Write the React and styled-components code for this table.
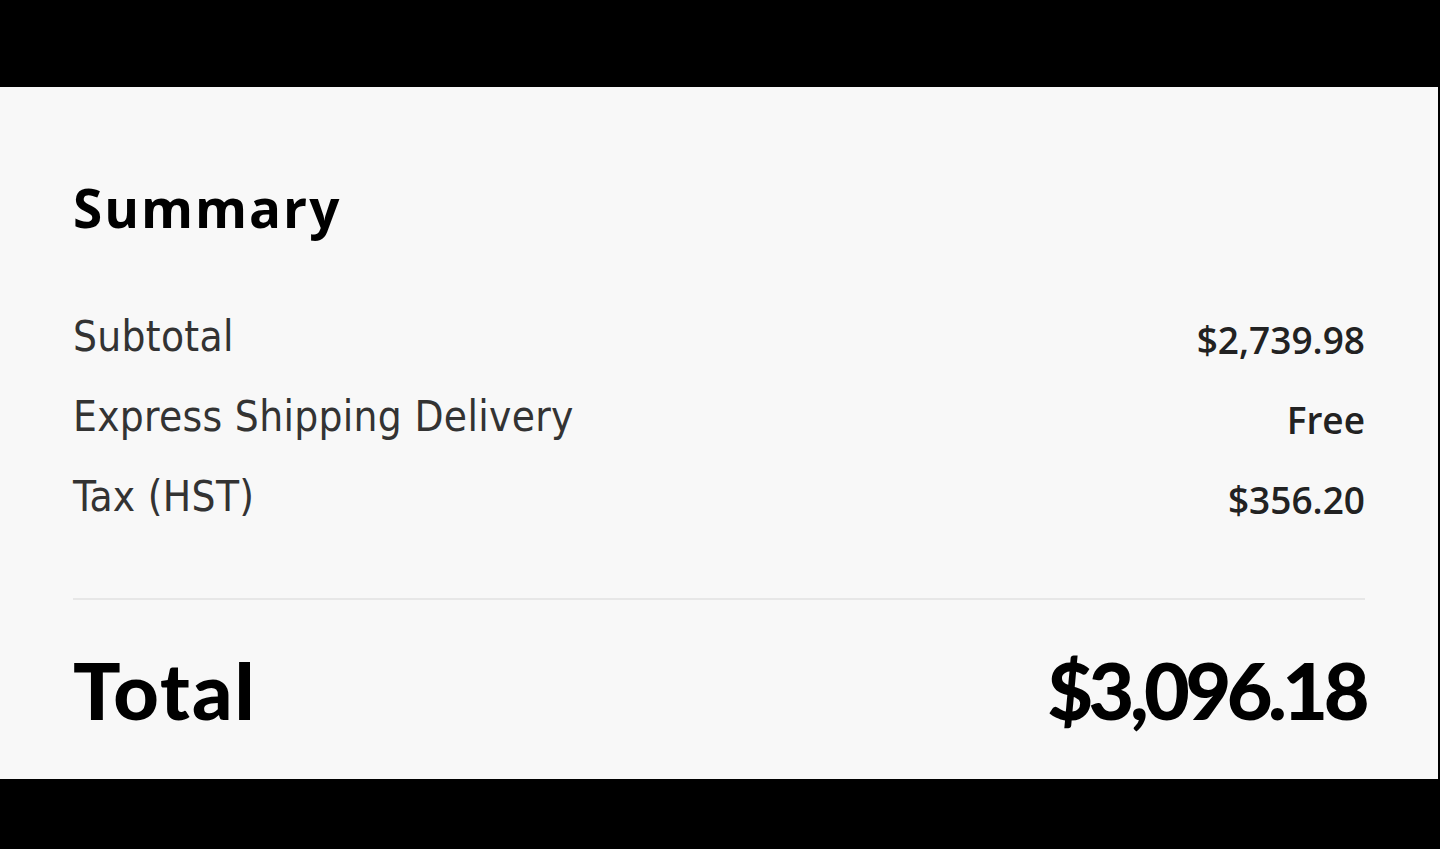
import React from 'react';
import styled, { createGlobalStyle } from 'styled-components';

const GlobalStyle = createGlobalStyle`
    html, body {
        margin: 0;
        padding: 0;
        background: #000;
    }
    #root {
        height: 849px;
        display: flex;
        flex-direction: column;
    }
`;

const Bar = styled.div`
    height: ${props => props.h}px;
    background: #000;
    flex: none;
`;

const Panel = styled.section`
    flex: 1;
    background: #f8f8f8;
    margin-right: 2px;
    padding: 91px 73px 0 73px;
    display: flex;
    flex-direction: column;
`;

const Title = styled.h2`
    margin: 0 0 74px 0;
    font-family: "Open Sans", sans-serif;
    font-weight: 700;
    font-size: 53px;
    line-height: 60px;
    color: #000;
    letter-spacing: 2px;
`;

const Rows = styled.div`
    display: flex;
    flex-direction: column;
    gap: 30px;
`;

const Row = styled.div`
    display: flex;
    justify-content: space-between;
    align-items: baseline;
`;

const Label = styled.span`
    font-family: "DejaVu Sans Condensed", "DejaVu Sans", sans-serif;
    font-size: 42px;
    line-height: 50px;
    color: #333;
    letter-spacing: 0.3px;
`;

const Value = styled.span`
    font-family: "Open Sans", sans-serif;
    font-weight: 600;
    font-size: 37px;
    line-height: 50px;
    color: #222;
    position: relative;
    top: 3px;
`;

const Divider = styled.hr`
    margin: 76px 0 0 0;
    border: none;
    height: 2px;
    background: #e7e7e7;
`;

const TotalRow = styled(Row)`
    margin-top: 45px;
`;

const Big = styled.span`
    font-family: "Lato", sans-serif;
    font-weight: 900;
    font-size: 79px;
    line-height: 90px;
    color: #000;
    letter-spacing: ${props => (props.amount ? '-4.5px' : '2px')};
`;

const items = [
    { label: 'Subtotal', value: '$2,739.98' },
    { label: 'Express Shipping Delivery', value: 'Free' },
    { label: 'Tax (HST)', value: '$356.20' },
];

const App = () => {
    return (
        <React.Fragment>
            <GlobalStyle />
            <Bar h={87} />
            <Panel>
                <Title>Summary</Title>
                <Rows>
                    {items.map(item => (
                        <Row key={item.label}>
                            <Label>{item.label}</Label>
                            <Value>{item.value}</Value>
                        </Row>
                    ))}
                </Rows>
                <Divider />
                <TotalRow>
                    <Big>Total</Big>
                    <Big amount>$3,096.18</Big>
                </TotalRow>
            </Panel>
            <Bar h={70} />
        </React.Fragment>
    );
};

export default App;
